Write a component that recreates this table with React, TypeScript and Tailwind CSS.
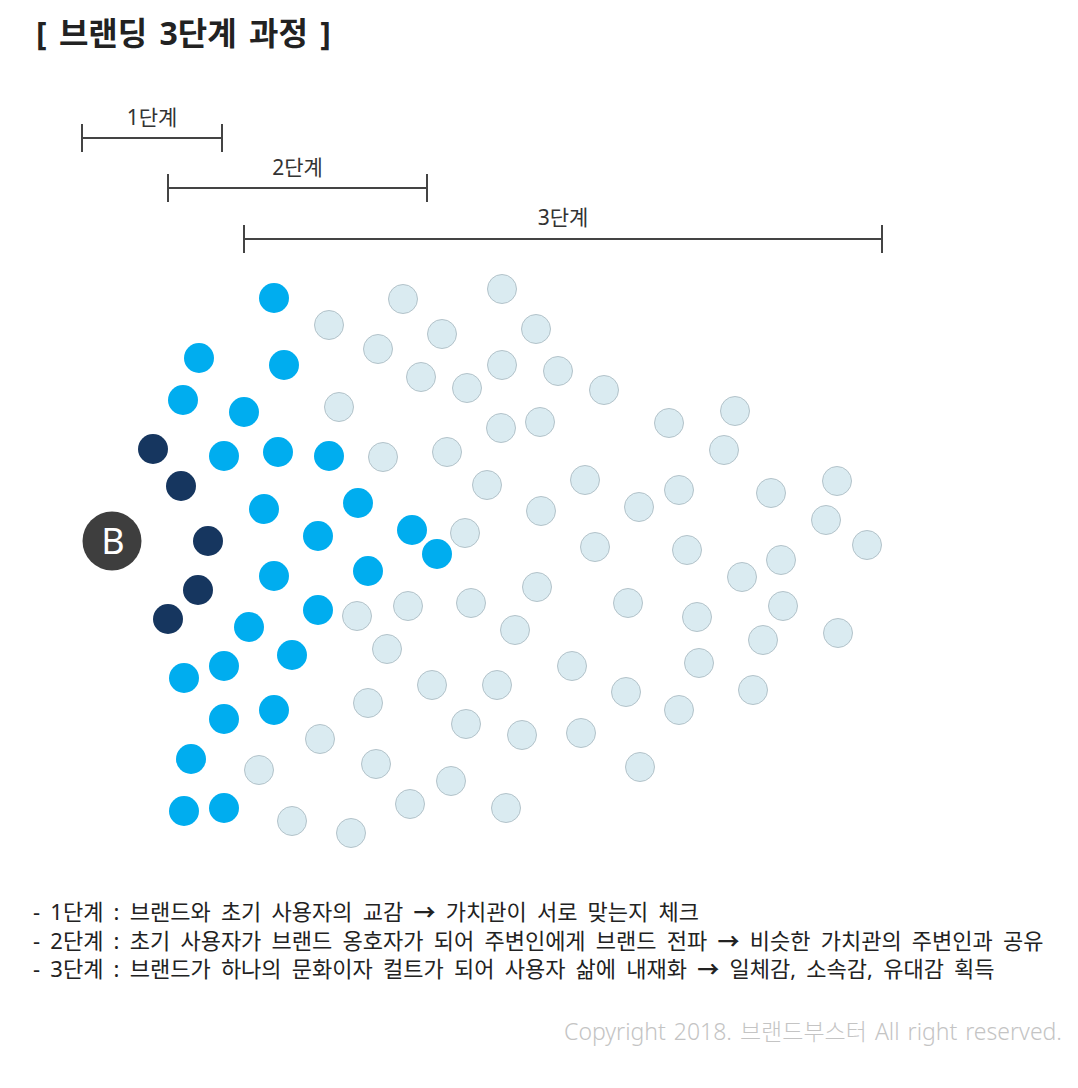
const font = "font-['Noto_Sans','Noto_Sans_CJK_KR',sans-serif]";

type Dot = [number, number];

const navy: Dot[] = [
  [153, 449], [181, 486], [208, 541], [198, 590], [168, 619],
];

const blue: Dot[] = [
  [274, 298], [199, 358], [284, 365], [183, 400], [244, 412],
  [224, 456], [278, 452], [329, 456], [264, 509], [358, 503],
  [318, 536], [412, 530], [437, 554], [368, 571], [274, 576],
  [318, 610], [249, 627], [292, 655], [224, 666], [184, 678],
  [224, 719], [274, 710], [191, 759], [184, 811], [224, 808],
];

const pale: Dot[] = [
  [403, 299], [502, 289], [329, 325], [442, 334], [536, 329],
  [378, 349], [421, 377], [467, 388], [502, 365], [558, 371],
  [604, 390], [339, 407], [501, 428], [540, 422], [383, 457],
  [447, 452], [669, 423], [735, 411], [724, 450], [487, 485],
  [585, 480], [541, 511], [639, 507], [679, 490], [771, 493],
  [837, 481], [826, 520], [867, 545], [465, 533], [595, 547],
  [687, 550], [742, 577], [781, 560], [357, 616], [408, 606],
  [471, 603], [537, 587], [628, 603], [697, 617], [783, 606],
  [838, 633], [763, 640], [387, 649], [515, 630], [572, 666],
  [699, 663], [753, 690], [432, 685], [497, 685], [626, 692],
  [679, 710], [368, 703], [466, 724], [522, 735], [581, 733],
  [640, 767], [320, 739], [376, 764], [451, 781], [259, 770],
  [410, 804], [506, 808], [292, 821], [351, 833],
];

const stages = [
  { label: "1단계", x1: 82, x2: 222, y: 138, ly: 117 },
  { label: "2단계", x1: 168, x2: 427, y: 188, ly: 167 },
  { label: "3단계", x1: 244, x2: 882, y: 239, ly: 217 },
];

// text before and after the arrow
const notes = [
  ["- 1단계 : 브랜드와 초기 사용자의 교감", "가치관이 서로 맞는지 체크"],
  ["- 2단계 : 초기 사용자가 브랜드 옹호자가 되어 주변인에게 브랜드 전파", "비슷한 가치관의 주변인과 공유"],
  ["- 3단계 : 브랜드가 하나의 문화이자 컬트가 되어 사용자 삶에 내재화", "일체감, 소속감, 유대감 획득"],
];

export default function App() {
  return (
    <div className={`w-[1078px] h-[1088px] bg-white text-[#222] ${font}`}>
      <div className="h-[70px] pt-[13px] pl-[36px]">
        <h1 className="text-[32px] leading-[40px] font-bold [word-spacing:4px]">
          [ 브랜딩 3단계 과정 ]
        </h1>
      </div>

      <div className="relative h-[800px]">
        <svg
          className="absolute inset-0"
          width="1078"
          height="800"
          viewBox="0 70 1078 800"
        >
          {stages.map((s) => (
            <g key={s.label} stroke="#444" strokeWidth="2">
              <line x1={s.x1} y1={s.y} x2={s.x2} y2={s.y} />
              <line x1={s.x1} y1={s.y - 14} x2={s.x1} y2={s.y + 14} />
              <line x1={s.x2} y1={s.y - 14} x2={s.x2} y2={s.y + 14} />
            </g>
          ))}
          {pale.map(([x, y], i) => (
            <circle key={`p${i}`} cx={x} cy={y} r="14.5" fill="#daebf1" stroke="#b3c3ca" strokeWidth="1" />
          ))}
          {blue.map(([x, y], i) => (
            <circle key={`b${i}`} cx={x} cy={y} r="15" fill="#00adef" />
          ))}
          {navy.map(([x, y], i) => (
            <circle key={`n${i}`} cx={x} cy={y} r="15" fill="#16365f" />
          ))}
          <circle cx="112" cy="541" r="29.5" fill="#3e3e3e" />
        </svg>

        {stages.map((s) => (
          <span
            key={s.label}
            className="absolute -translate-x-1/2 text-[21px] leading-[24px] text-[#333]"
            style={{ left: (s.x1 + s.x2) / 2, top: s.ly - 70 - 12 }}
          >
            {s.label}
          </span>
        ))}
        <span className="absolute left-[113px] top-[471px] -translate-x-1/2 -translate-y-1/2 text-[36px] leading-none text-white">
          B
        </span>
      </div>

      <div className="pt-[27px] pl-[33px] text-[22px] leading-[28.5px] text-[#222] [word-spacing:4.5px]">
        {notes.map(([a, b]) => (
          <p key={a}>
            {a} <span className="font-bold">→</span> {b}
          </p>
        ))}
      </div>

      <p className="mt-[34px] pr-[16px] text-right text-[23px] leading-[28px] font-light text-[#c4c4c4] [word-spacing:2px]">
        Copyright 2018. 브랜드부스터 All right reserved.
      </p>
    </div>
  );
}
